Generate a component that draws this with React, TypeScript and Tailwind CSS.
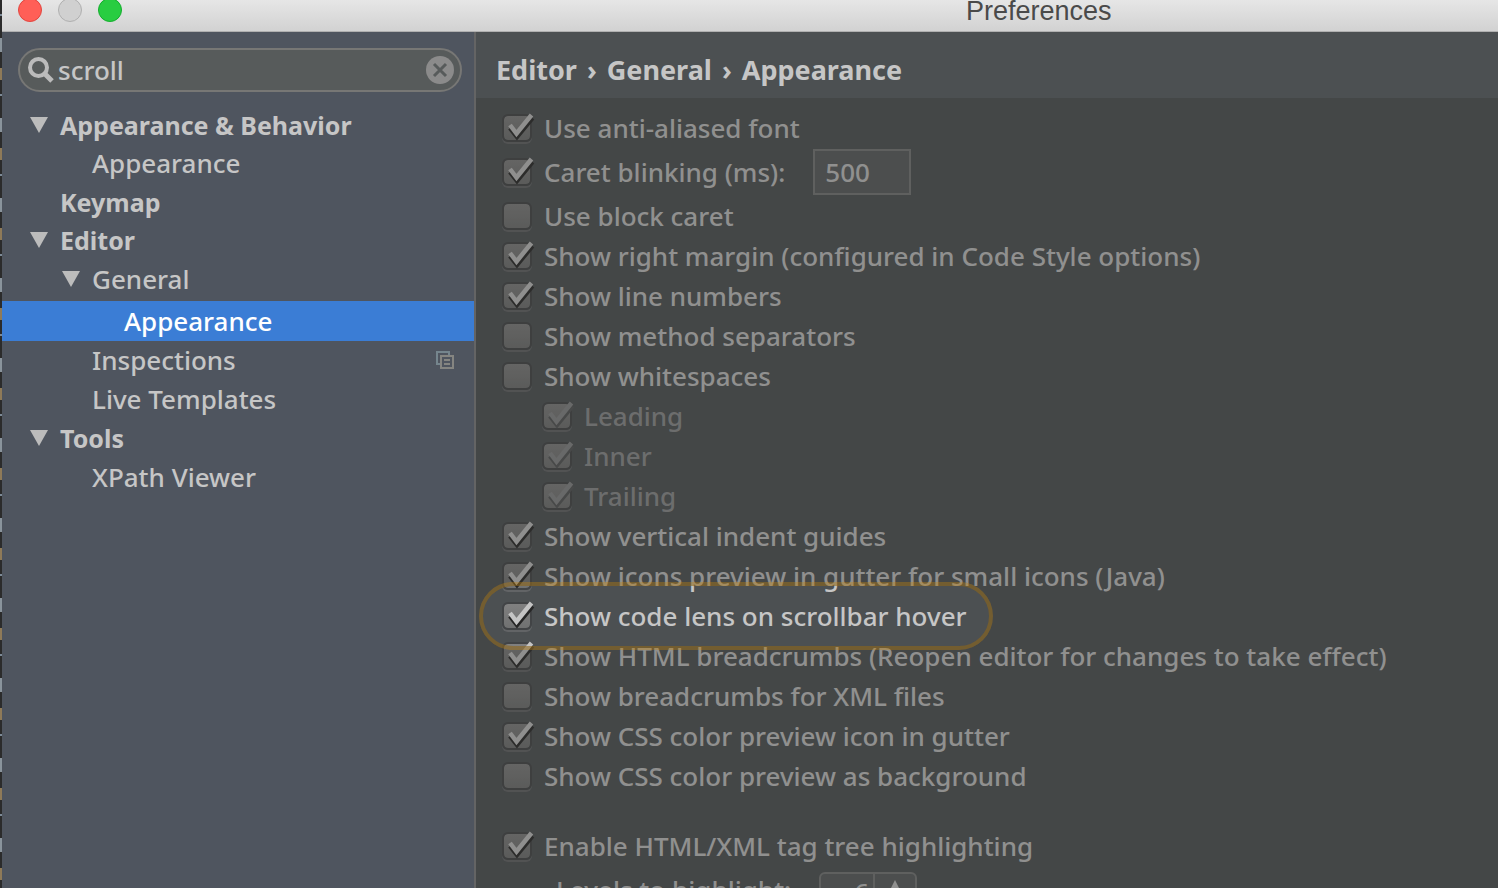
type Opt = {
    label: string
    checked?: boolean
    disabled?: boolean
    lit?: boolean
}

const options: Opt[] = [
    { label: 'Use block caret' },
    { label: 'Show right margin (configured in Code Style options)', checked: true },
    { label: 'Show line numbers', checked: true },
    { label: 'Show method separators' },
    { label: 'Show whitespaces' },
    { label: 'Leading', checked: true, disabled: true },
    { label: 'Inner', checked: true, disabled: true },
    { label: 'Trailing', checked: true, disabled: true },
    { label: 'Show vertical indent guides', checked: true },
    { label: 'Show icons preview in gutter for small icons (Java)', checked: true },
    { label: 'Show code lens on scrollbar hover', checked: true, lit: true },
    { label: 'Show HTML breadcrumbs (Reopen editor for changes to take effect)', checked: true },
    { label: 'Show breadcrumbs for XML files' },
    { label: 'Show CSS color preview icon in gutter', checked: true },
    { label: 'Show CSS color preview as background' },
]

function CheckRow({ label, checked, disabled, lit }: Opt) {
    return (
        <div className={disabled ? 'relative flex h-10 items-center pl-10' : 'relative flex h-10 items-center'}>
            <label className="flex items-center gap-3 whitespace-nowrap">
                <span className="grid size-[30px] shrink-0 items-center">
                    <input
                        type="checkbox"
                        defaultChecked={checked}
                        disabled={disabled}
                        className="col-start-1 row-start-1 h-7 w-[30px] peer appearance-none rounded-md border-2 border-[#424446] bg-linear-to-b from-[#808080] to-[#707171] bg-clip-padding shadow-[0_2px_0_#626466]"
                    />
                    <svg
                        viewBox="0 0 30 30"
                        fill="none"
                        className="pointer-events-none invisible col-start-1 row-start-1 size-[30px] overflow-visible peer-checked:visible"
                    >
                        <path d="M8 15L15 24L30.500 5" stroke={disabled ? '#525455' : '#262626'} strokeWidth="4.500" />
                        <path d="M8 12L14.500 20.500L29.500 2" stroke={disabled ? '#868788' : '#c4c4c4'} strokeWidth="4.500" />
                    </svg>
                </span>
                <span className={disabled ? 'text-[#8c8e8f]' : ''}>{label}</span>
            </label>
            {lit && (
                <div className="pointer-events-none absolute -left-[23px] z-10 h-[68px] w-[514px] rounded-full border-4 border-[#8d651a]/60 shadow-[0_0_0_2000px_#37373560]" />
            )}
        </div>
    )
}

function Arrow() {
    return (
        <svg viewBox="0 0 18 16" className="h-4 w-[18px] shrink-0 fill-[#bcbcbc]">
            <path d="M0 0H18L9 16Z" />
        </svg>
    )
}

function TreeItem({ label, className }: { label: string; className: string }) {
    return (
        <li>
            <a href="#" className={`flex h-10 items-center ${className}`}>
                {label}
            </a>
        </li>
    )
}

function Sidebar() {
    return (
        <aside className="w-[474px] shrink-0 border-r-2 border-[#646464] bg-[#4f555f]">
            <div className="mt-4 mr-3 ml-4 flex h-11 items-center gap-1 rounded-full border-2 border-[#777775] bg-[#575b5b] pr-1.5 pl-2">
                <svg viewBox="0 0 26 26" fill="none" stroke="#bbbbbb" className="size-[26px] shrink-0">
                    <circle cx="10.500" cy="10.500" r="8.500" strokeWidth="4" />
                    <path d="M16.500 16.500L24 24" strokeWidth="5" />
                </svg>
                <input
                    type="text"
                    aria-label="Search settings"
                    defaultValue="scroll"
                    className="min-w-0 flex-1 bg-transparent outline-none"
                />
                <button type="button" aria-label="Clear search">
                    <svg viewBox="0 0 28 28" className="size-7">
                        <circle cx="14" cy="14" r="14" fill="#8b8b8b" />
                        <path d="M8 8L20 20M20 8L8 20" stroke="#575b5b" strokeWidth="3" />
                    </svg>
                </button>
            </div>
            <ul className="mt-[15px]">
                <li>
                    <a href="#" className="flex h-9 items-center gap-3 pl-7 text-[25px] font-bold">
                        <Arrow /> Appearance & Behavior
                    </a>
                </li>
                <TreeItem label="Appearance" className="pl-[90px]" />
                <li>
                    <a href="#" className="flex h-[38px] items-center pl-[58px] text-[25px] font-bold">
                        Keymap
                    </a>
                </li>
                <li>
                    <a href="#" className="flex h-[38px] items-center gap-3 pl-7 text-[25px] font-bold">
                        <Arrow /> Editor
                    </a>
                </li>
                <li>
                    <a href="#" className="mb-0.5 flex h-10 items-center gap-3 pl-[60px]">
                        <Arrow /> General
                    </a>
                </li>
                <TreeItem label="Appearance" className="bg-[#3b7dd5] pl-[122px] text-white" />
                <li>
                    <a href="#" className="flex h-[38px] items-center justify-between pr-5 pl-[90px]">
                        Inspections
                        <svg viewBox="0 0 18 18" fill="none" strokeWidth="2" className="size-[18px]">
                            <path d="M4 13H1V1H13V4" stroke="#75858d" />
                            <path d="M5 5H17V17H5ZM8 9H14M8 13H14" stroke="#858581" />
                        </svg>
                    </a>
                </li>
                <TreeItem label="Live Templates" className="pl-[90px]" />
                <li>
                    <a href="#" className="flex h-[38px] items-center gap-3 pl-7 text-[25px] font-bold">
                        <Arrow /> Tools
                    </a>
                </li>
                <TreeItem label="XPath Viewer" className="pl-[90px]" />
            </ul>
        </aside>
    )
}

export default function App() {
    return (
        <div className="flex h-screen overflow-hidden bg-[#4c5052] font-['Noto_Sans',sans-serif] text-[26px] leading-8 font-medium text-[#c6c6c6]">
            {/* sliver of the editor window behind */}
            <div className="w-0.5 shrink-0 bg-[repeating-linear-gradient(#2b2b2b_0_14px,#7d8b98_14px_16px,#2b2b2b_16px_38px,#8a949c_38px_52px,#2b2b2b_52px_68px,#8f7a58_68px_80px)]" />
            <div className="flex min-w-0 flex-1 flex-col">
                <header className="flex h-8 shrink-0 items-center border-b border-[#b0b0b0] bg-linear-to-b from-[#e6e6e6] to-[#d2d2d2] pb-3">
                    <div className="flex flex-1 gap-4 pl-4">
                        <button type="button" aria-label="Close" className="size-6 rounded-full border border-[#e2463f] bg-[#ff5f57]" />
                        <button type="button" aria-label="Minimize" className="size-6 rounded-full border border-[#b0b0b0] bg-[#d0d0d0]" />
                        <button type="button" aria-label="Zoom" className="size-6 rounded-full border border-[#14ae2e] bg-[#28cd41]" />
                    </div>
                    <h1 className="w-[532px] pt-0.5 font-['Liberation_Sans',sans-serif] text-[27px] font-normal text-[#4a4a4a]">
                        Preferences
                    </h1>
                </header>
                <div className="flex min-h-0 flex-1">
                    <Sidebar />
                    <main className="flex min-w-0 flex-1 flex-col">
                        <h2 className="flex h-[66px] shrink-0 items-center gap-2.5 pt-2.5 pl-5 text-[27px] font-bold">
                            Editor <span>›</span> General <span>›</span> Appearance
                        </h2>
                        <form className="min-h-0 flex-1 overflow-hidden pt-2.5 pl-[26px]">
                            <CheckRow label="Use anti-aliased font" checked />
                            <div className="flex h-12 items-center gap-7">
                                <CheckRow label="Caret blinking (ms):" checked />
                                <input
                                    type="text"
                                    aria-label="Caret blinking interval"
                                    defaultValue="500"
                                    className="h-[46px] w-[98px] border-2 border-[#777979] bg-[#585c5e] px-2.5"
                                />
                            </div>
                            {options.map((opt) => (
                                <CheckRow key={opt.label} {...opt} />
                            ))}
                            <div className="mt-[30px]">
                                <CheckRow label="Enable HTML/XML tag tree highlighting" checked />
                            </div>
                            <div className="mt-1.5 flex items-start gap-7 pl-[54px]">
                                <label htmlFor="levels" className="leading-9">
                                    Levels to highlight:
                                </label>
                                <div className="flex h-11 w-[98px] rounded-md border-2 border-[#777979] bg-[#585c5e]">
                                    <input
                                        id="levels"
                                        type="text"
                                        defaultValue="6"
                                        className="h-9 w-[54px] border-r-2 border-[#777979] pr-1 text-right"
                                    />
                                    <button type="button" aria-label="More levels" className="flex flex-1 justify-center pt-1.5">
                                        <svg viewBox="0 0 12 12" className="size-3 fill-[#c6c6c6]">
                                            <path d="M6 0L12 12H0Z" />
                                        </svg>
                                    </button>
                                </div>
                            </div>
                        </form>
                    </main>
                </div>
            </div>
        </div>
    )
}
